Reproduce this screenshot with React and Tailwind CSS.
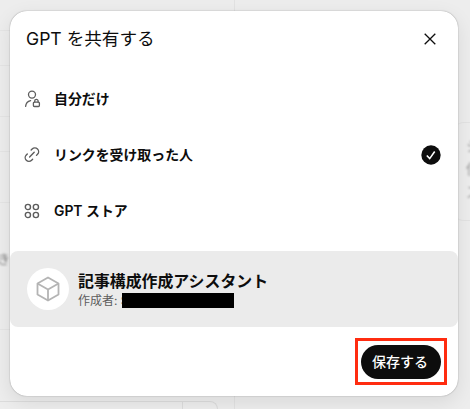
const options = [
  { id: "private", label: "自分だけ", icon: PersonLockIcon },
  { id: "link", label: "リンクを受け取った人", icon: LinkIcon },
  { id: "store", label: "GPT ストア", icon: StoreIcon },
];

function PersonLockIcon() {
  return (
    <svg width="18" height="18" viewBox="0 0 18 18" fill="none" stroke="#5d5d5d" strokeWidth="1.3" strokeLinecap="round">
      <circle cx="8" cy="4.6" r="3.5" />
      <path d="M1.600 16.400c.3-2.900 2.100-5.100 5-5.700" />
      <rect x="9.400" y="12.100" width="6" height="4.400" rx="1" />
      <path d="M10.700 12v-.9a1.700 1.700 0 0 1 3.400 0v.9" />
    </svg>
  );
}

function LinkIcon() {
  return (
    <svg width="18" height="18" viewBox="-0.1 -0.6 19.6 19.6" fill="none" stroke="#5d5d5d" strokeWidth="1.5" strokeLinecap="round">
      <path d="M7.700 3.800l1.100-1.100a4.100 4.100 0 0 1 5.800 5.800l-1.100 1.100" />
      <path d="M9.300 13.800l-1.100 1.100a4.100 4.100 0 0 1-5.800-5.800L3.500 8" />
      <path d="M6 11.300l5-5" />
    </svg>
  );
}

function StoreIcon() {
  return (
    <svg width="18" height="18" viewBox="0 0 18 18" fill="none" stroke="#5d5d5d" strokeWidth="1.4">
      <circle cx="3.900" cy="5" r="2.600" />
      <circle cx="11.900" cy="5" r="2.600" />
      <circle cx="3.900" cy="13" r="2.600" />
      <circle cx="11.900" cy="13" r="2.600" />
    </svg>
  );
}

function CubeIcon() {
  return (
    <svg width="24" height="26" viewBox="0 0 24 26" fill="none" stroke="#b4b4b4" strokeWidth="1.8" strokeLinejoin="round">
      <path d="M12 1.500l10.500 6v11L12 24.500l-10.500-6v-11z" />
      <path d="M1.500 7.500L12 13.500l10.500-6M12 13.500v11" />
    </svg>
  );
}

function CheckBadge() {
  return (
    <svg width="20" height="20" viewBox="0 0 20 20" fill="none">
      <circle cx="10" cy="10" r="9.700" fill="#0d0d0d" />
      <path d="M5.800 10.500l2.900 3.100 5-7.100" stroke="#fff" strokeWidth="1.600" />
    </svg>
  );
}

// Dimmed page behind the dialog
function Backdrop() {
  return (
    <div className="col-start-1 row-start-1 flex overflow-hidden bg-[#ededed]">
      <div className="flex w-[235px] shrink-0 flex-col border-r border-[#e2e2e2]">
        <div className="h-[31px] shrink-0 border-b border-[#e5e5e5]" />
        <div className="h-[35px] shrink-0 border-b border-[#e5e5e5]" />
        <div className="h-[51px] shrink-0 border-b border-[#e5e5e5]" />
        <div className="h-[35px] shrink-0 border-b border-[#e5e5e5]" />
        <div className="h-[51px] shrink-0 border-b border-[#e5e5e5]" />
        <div className="flex h-[127px] shrink-0 items-center border-b border-[#e5e5e5]">
          <span className="-ml-[3px] pb-[14px] text-[13px] leading-[18px] text-[#858585] blur-[0.8px]">き</span>
        </div>
        <div className="mt-[71px] flex h-5 w-[218px] shrink-0 justify-end rounded-tr-lg border-t border-r border-[#dcdcdc]">
          <div className="w-[35px] border-l border-[#dcdcdc]" />
        </div>
      </div>
      <div className="flex flex-1 justify-end pt-[122px]">
        <div className="h-[99px] w-[18px] rounded-l-xl border-y border-l border-[#e3e3e3] pt-[11px] pl-[13px] text-[14px] leading-[23px] text-[#9c9c9c]">
          <div className="blur-[1px]">シ</div>
          <div className="blur-[1px]">債</div>
          <div className="blur-[1px]">ス</div>
        </div>
      </div>
    </div>
  );
}

export default function App() {
  const selected = "link";

  return (
    <div className="grid h-[409px] w-[470px] grid-cols-1 grid-rows-1 overflow-hidden font-['Inter','Noto_Sans_CJK_JP',sans-serif] text-[#0d0d0d]">
      <Backdrop />
      <div className="z-10 col-start-1 row-start-1 mt-[11px] ml-[10px] flex h-[385px] w-[448px] flex-col overflow-hidden rounded-[17px] bg-white shadow-[0_0_1px_rgba(0,0,0,0.35),0_0_2px_rgba(0,0,0,0.12),0_6px_20px_rgba(0,0,0,0.09)]">
        <header className="flex h-[60px] shrink-0 items-center justify-between pr-[22px] pl-4">
          <h1 className="pb-1 text-[17.600px] leading-6">GPT を共有する</h1>
          <button type="button" aria-label="閉じる" className="pb-1">
            <svg width="12" height="12" viewBox="0 0 12 12" fill="none" stroke="#0d0d0d" strokeWidth="1.300">
              <path d="M.7.700l10.600 10.600M11.300.700L.700 11.300" />
            </svg>
          </button>
        </header>

        <ul className="h-[180px] shrink-0">
          {options.map(({ id, label, icon: Icon }) => (
            <li key={id} className="flex h-14 items-center pr-[17px] pl-[14px]">
              <Icon />
              <span className="ml-3 flex-1 text-[13.900px] leading-5 font-semibold">{label}</span>
              {id === selected && <CheckBadge />}
            </li>
          ))}
        </ul>

        <section className="flex h-[76px] shrink-0 items-center rounded-[8px] bg-[#ebebeb] pl-[17px]">
          <div className="flex size-[42px] items-center justify-center rounded-full bg-white">
            <CubeIcon />
          </div>
          <div className="ml-[9px] pt-[3px]">
            <h2 className="text-[15.900px] leading-5 font-semibold">記事構成作成アシスタント</h2>
            <p className="relative flex text-[12px] leading-[18px] text-[#5d5d5d]">
              作成者: S
              <span className="absolute top-px left-[44px] h-[15px] w-[112px] bg-black" />
            </p>
          </div>
        </section>

        <footer className="flex flex-1 items-center justify-end pr-[11px]">
          <div className="border-[3px] border-[#ff2c10] px-[3px] pt-1 pb-[3px]">
            <button type="button" className="flex h-[34px] w-20 items-center justify-center rounded-full bg-[#0d0d0d] pr-0.5 pb-0.5 text-[14px] font-medium text-white">
              保存する
            </button>
          </div>
        </footer>
      </div>
    </div>
  );
}
